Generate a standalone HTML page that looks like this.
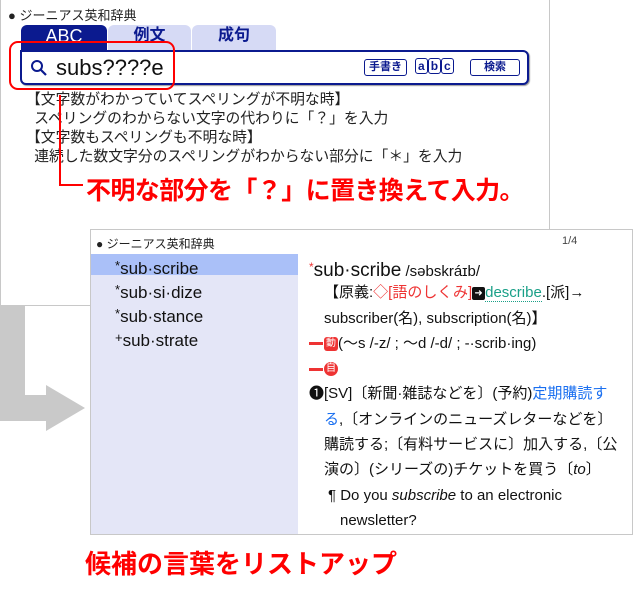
<!DOCTYPE html>
<html><head><meta charset="utf-8"><style>
*{margin:0;padding:0;box-sizing:border-box}
body{width:640px;height:600px;background:#fff;position:relative;overflow:hidden;font-family:"Liberation Sans","Noto Sans CJK JP",sans-serif;color:#111}
.a{position:absolute;white-space:nowrap}
.r div{height:25.3px;line-height:25.3px}
.bd{display:inline-block;width:14px;height:3px;background:#e33;vertical-align:middle;margin-right:1px}
.bg{display:inline-block;width:14px;height:14px;background:#e33;color:#fff;font-size:10px;line-height:14px;text-align:center;vertical-align:middle}
.tab{position:absolute;top:25px;height:27px;border-radius:6px 6px 0 0}
.tt{position:absolute;top:27px;text-align:center;font-size:16px;line-height:18px;z-index:5}
</style></head><body>
<div class="a" style="left:0;top:0;width:550px;height:306px;border:1px solid #c8c8c8;border-top:none"></div>
<div class="a" style="left:8px;top:5px;font-size:13px;color:#222">● ジーニアス英和辞典</div>
<div class="tab" style="left:21px;width:86px;background:#0b1a8f"></div>
<div class="tab" style="left:108px;width:83px;background:#d6daf5"></div>
<div class="tab" style="left:192px;width:84px;background:#d6daf5"></div>
<div class="a" style="left:20px;top:50px;width:509px;height:35px;border:2.5px solid #0b1a8f;border-radius:0 6px 6px 6px;background:#fff;box-shadow:1px 1px 1px #999"></div>
<div class="tt" style="left:21px;width:86px;color:#fff;font-size:18px">ABC</div>
<div class="tt" style="left:108px;width:83px;color:#0b1a8f;font-weight:bold">例文</div>
<div class="tt" style="left:192px;width:84px;color:#0b1a8f;font-weight:bold">成句</div>
<svg class="a" style="left:30px;top:59px" width="18" height="18"><circle cx="7" cy="7" r="5" fill="none" stroke="#0b1a8f" stroke-width="2"/><line x1="11" y1="11" x2="16" y2="16" stroke="#0b1a8f" stroke-width="2.2"/></svg>
<div class="a" style="left:56px;top:55px;font-size:22px;color:#111">subs????e</div>
<div class="a" style="left:364px;top:59px;width:43px;height:17px;border:1.2px solid #0b1a8f;border-radius:3px;font-size:11px;color:#0b1a8f;text-align:center;line-height:15px;font-weight:bold">手書き</div>
<div class="a" style="left:415px;top:59px;font-size:12px;line-height:15px;color:#0b1a8f;font-weight:bold"><span style="border:1.2px solid #0b1a8f;border-radius:3px;padding:0 2px">a</span><span style="border:1.2px solid #0b1a8f;border-radius:3px;padding:0 2px">b</span><span style="border:1.2px solid #0b1a8f;border-radius:3px;padding:0 2px">c</span></div>
<div class="a" style="left:470px;top:59px;width:50px;height:17px;border:1.2px solid #0b1a8f;border-radius:3px;font-size:11px;color:#0b1a8f;text-align:center;line-height:15px;font-weight:bold">検索</div>
<div class="a" style="left:9px;top:41px;width:166px;height:49px;border:2px solid #f00;border-radius:9px;z-index:6"></div>
<div class="a" style="left:26px;top:91px;font-size:14.8px;line-height:19px;color:#222">【文字数がわかっていてスペリングが不明な時】<br>&nbsp;&nbsp;スペリングのわからない文字の代わりに「？」を入力<br>【文字数もスペリングも不明な時】<br>&nbsp;&nbsp;連続した数文字分のスペリングがわからない部分に「＊」を入力</div>
<div class="a" style="left:59px;top:95px;width:2px;height:91px;background:#f00"></div>
<div class="a" style="left:59px;top:184px;width:24px;height:2px;background:#f00"></div>
<div class="a" style="left:86px;top:171px;font-size:25px;color:#f00;font-weight:bold;letter-spacing:-0.6px">不明な部分を「？」に置き換えて入力。</div>
<svg class="a" style="left:0;top:305px" width="90" height="130"><path d="M0 0H25V90H46V80L85 103L46 126V116H0Z" fill="#c9c9c9"/></svg>
<div class="a" style="left:90px;top:229px;width:543px;height:306px;border:1px solid #c8c8c8;background:#fff"></div>
<div class="a" style="left:96px;top:235px;font-size:12px;color:#222">● ジーニアス英和辞典</div>
<div class="a" style="left:562px;top:235px;font-size:11px;color:#444">1/4</div>
<div class="a" style="left:91px;top:254px;width:207px;height:280px;background:#e4e6f7"></div>
<div class="a" style="left:91px;top:254px;width:207px;height:21px;background:#aac0f8"></div>
<div class="a" style="left:115px;top:255px;font-size:17px;line-height:21px;color:#111"><span style="font-size:13px;vertical-align:4px">*</span>sub·scribe<br><span style="font-size:13px;vertical-align:4px">*</span>sub·si·dize<br><span style="font-size:13px;vertical-align:4px">*</span>sub·stance<br><span style="font-size:13px;vertical-align:4px">+</span>sub·strate</div>
<div class="a r" style="left:309px;top:255px;font-size:15px;color:#111">
<div><span style="color:#e33;font-size:12px;vertical-align:5px">*</span><span style="font-size:19px">sub·scribe</span> /səbskráɪb/</div>
<div style="padding-left:15px">【原義:<span style="color:#e33">◇[語のしくみ]</span><span style="display:inline-block;width:13px;height:13px;background:#111;color:#fff;font-size:10px;line-height:13px;text-align:center;border-radius:2px;vertical-align:middle">➜</span><span style="color:#1aa088;border-bottom:1px dotted #1aa088;line-height:16px;display:inline-block">describe</span>.[派]→</div>
<div style="padding-left:15px">subscriber(名), subscription(名)】</div>
<div><span class="bd"></span><span class="bg" style="border-radius:3px">動</span>(〜s /-z/ ; 〜d /-d/ ; -·scrib·ing)</div>
<div><span class="bd"></span><span class="bg" style="border-radius:50%">自</span></div>
<div>❶[SV]〔新聞·雑誌などを〕(予約)<span style="color:#1a6ff0">定期購読す</span></div>
<div style="padding-left:15px"><span style="color:#1a6ff0">る</span>,〔オンラインのニューズレターなどを〕</div>
<div style="padding-left:15px">購読する;〔有料サービスに〕加入する,〔公</div>
<div style="padding-left:15px">演の〕(シリーズの)チケットを買う〔<i>to</i>〕</div>
<div style="padding-left:19px">¶ Do you <i>subscribe</i> to an electronic</div>
<div style="padding-left:31px">newsletter?</div>
</div>
<div class="a" style="left:85px;top:544px;font-size:26px;color:#f00;font-weight:bold">候補の言葉をリストアップ</div>
</body></html>
